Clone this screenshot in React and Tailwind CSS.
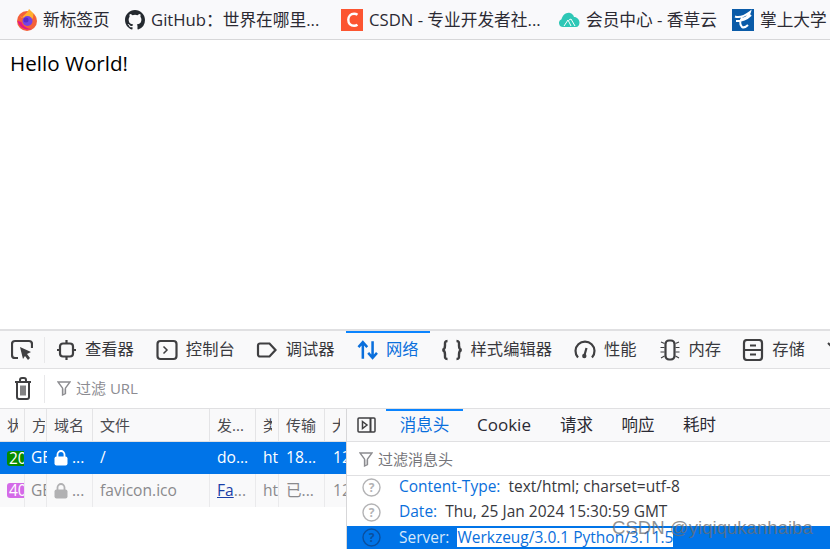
import React from 'react'

const FONT = 'font-["Open_Sans","Noto_Sans_CJK_SC",sans-serif]'

function FirefoxIcon() {
  return (
    <svg width="22" height="22" viewBox="0 0 22 22">
      <circle cx="11" cy="12" r="10" fill="#f4603a" />
      <path d="M3 5c1 2 2 3 3 4 1-3 5-4 7-9 2 2 7 6 8 12 0-3-2-6-4-7 1 4-1 6-3 5-2 0-10-1-11-5z" fill="#ffb02e" />
      <path d="M1.500 12c2 7 9 10 14 8-4 0-9-3-10-7z" fill="#e31587" />
      <circle cx="11.500" cy="12" r="5" fill="#7542e5" />
      <circle cx="10" cy="11" r="2.500" fill="#592acb" />
    </svg>
  )
}

function GitHubIcon() {
  return (
    <svg width="20" height="20" viewBox="0 0 16 16" fill="#24292f">
      <path d="M8 0C3.58 0 0 3.58 0 8c0 3.54 2.29 6.53 5.47 7.59.4.07.55-.17.55-.38 0-.19-.01-.82-.01-1.49-2.01.37-2.53-.49-2.69-.94-.09-.23-.48-.94-.82-1.13-.28-.15-.68-.52-.01-.53.63-.01 1.08.58 1.23.82.72 1.21 1.87.87 2.33.66.07-.52.28-.87.51-1.07-1.78-.2-3.64-.89-3.64-3.95 0-.87.31-1.59.82-2.15-.08-.2-.36-1.02.08-2.12 0 0 .67-.21 2.2.82a7.6 7.6 0 0 1 4 0c1.53-1.04 2.2-.82 2.2-.82.44 1.1.16 1.92.08 2.12.51.56.82 1.27.82 2.15 0 3.07-1.87 3.75-3.65 3.95.29.25.54.73.54 1.48 0 1.07-.01 1.93-.01 2.2 0 .21.15.46.55.38A8 8 0 0 0 16 8c0-4.42-3.58-8-8-8z" />
    </svg>
  )
}

function CsdnIcon() {
  return (
    <svg width="22" height="22" viewBox="0 0 22 22">
      <rect width="22" height="22" fill="#fc5531" />
      <path d="M16.500 5.800c-1-.7-2.200-1-3.400-1-3.600 0-5.800 2.600-5.800 6s2.200 6 5.800 6c1.200 0 2.400-.3 3.400-1" fill="none" stroke="#fff" strokeWidth="2.400" />
    </svg>
  )
}

function CloudIcon() {
  return (
    <svg width="21" height="15" viewBox="0 0 21 15">
      <path d="M4 15a4 4 0 0 1-1.500-7.700C3.500 3 7.500 0 11 1c2 .5 3.500 2 4 4 3 0 5.500 2.500 5.500 5.500 0 2.500-1.500 4.500-3.500 4.500z" fill="#2ec7b6" />
      <path d="M5 14l4-6 3 6M10 8l2-1 4 7" fill="none" stroke="#fff" strokeWidth="1" />
    </svg>
  )
}

function TelecomIcon() {
  return (
    <svg width="22" height="22" viewBox="0 0 22 22">
      <rect width="22" height="22" fill="#0a5ba8" />
      <path d="M3 7.500c4 1.500 9 0 15-4.500-1 4-5 7-9 7M4 12c4 0 10-1 15-6M11 8c-3 3-4 7-1 10 2 1 4 0 6-2" fill="none" stroke="#fff" strokeWidth="2" />
    </svg>
  )
}

function Bookmark({ icon, label, className }) {
  return (
    <div className={`flex items-center shrink-0 whitespace-nowrap ${className}`}>
      {icon}
      <span className="text-[16.7px] text-[#2b2a33] leading-none pt-[1px]">{label}</span>
    </div>
  )
}

const STROKE = { fill: 'none', stroke: '#3f3f41', strokeWidth: 2.2 }

const TOOL_ICONS = {
  inspector: (
    <svg width="22" height="22" viewBox="0 0 22 22" {...STROKE}>
      <rect x="5" y="4.500" width="13" height="13" rx="3" />
      <path d="M11.500 1v3.500M11.500 17.500V21M2 11h3M18 11h3" />
    </svg>
  ),
  console: (
    <svg width="22" height="22" viewBox="0 0 22 22" {...STROKE}>
      <rect x="1.500" y="2" width="19" height="18" rx="3" />
      <path d="M7.500 7.500l3.500 3.500-3.500 3.500" strokeWidth="1.500" />
    </svg>
  ),
  debugger: (
    <svg width="22" height="22" viewBox="0 0 22 22" {...STROKE}>
      <path d="M4 4.500h9.500l6 6.500-6 6.500H4a2 2 0 0 1-2-2v-9a2 2 0 0 1 2-2z" />
    </svg>
  ),
  network: (
    <svg width="22" height="22" viewBox="0 0 22 22" fill="none" stroke="#0a6fdc" strokeWidth="2.600">
      <path d="M6 20V3M1.500 8L6 3l4.500 5M16 2v17M11.500 14l4.500 5 4.500-5" />
    </svg>
  ),
  style: (
    <svg width="22" height="22" viewBox="0 0 22 22" {...STROKE} strokeWidth="2.400">
      <path d="M6.500 2C3.500 2 4 4 4 6.500 4 9 3.500 10.500 1.500 11 3.500 11.500 4 13 4 15.500S3.500 20 6.500 20M15.500 2c3 0 2.500 2 2.500 4.500s.5 4 2.500 4.500c-2 .5-2.500 2-2.500 4.500s.5 4.500-2.500 4.500" />
    </svg>
  ),
  perf: (
    <svg width="22" height="22" viewBox="0 0 22 22" {...STROKE}>
      <path d="M4 18.500a9.500 9.500 0 1 1 14 0" />
      <path d="M12.500 9l-2 7" />
      <circle cx="10.300" cy="17" r="2.200" fill="#3f3f41" stroke="none" />
    </svg>
  ),
  memory: (
    <svg width="22" height="22" viewBox="0 0 22 22" {...STROKE}>
      <rect x="6.500" y="1.500" width="9" height="19" rx="3.500" />
      <path d="M5.500 4.500L2 3M5.500 8.500H1.500M5.500 13H1.500M5.500 17L2 19M16.500 4.500L20 3M16.500 8.500h4M16.500 13h4M16.500 17l3.500 2" strokeWidth="1.200" />
    </svg>
  ),
  storage: (
    <svg width="22" height="22" viewBox="0 0 22 22" {...STROKE}>
      <rect x="2" y="1" width="18" height="20" rx="3" />
      <path d="M2 11h18M8 6.500h6M8 15.500h6" />
    </svg>
  ),
}

const TOOL_TABS = [
  { key: 'inspector', label: '查看器', pl: 'pl-[10px]' },
  { key: 'console', label: '控制台', pl: 'pl-[11px]' },
  { key: 'debugger', label: '调试器', pl: 'pl-[10px]' },
  { key: 'network', label: '网络', pl: 'pl-[11px]', active: true, w: 'w-[84px]' },
  { key: 'style', label: '样式编辑器', pl: 'pl-[11px]' },
  { key: 'perf', label: '性能', pl: 'pl-[11px]' },
  { key: 'memory', label: '内存', pl: 'pl-[11px]' },
  { key: 'storage', label: '存储', pl: 'pl-[10px]' },
]

function LockIcon({ color }) {
  return (
    <svg width="14" height="16" viewBox="0 0 14 16" className="shrink-0">
      <path d="M3.500 7V4.500a3.500 3.500 0 0 1 7 0V7" fill="none" stroke={color} strokeWidth="1.800" />
      <rect x="0.500" y="6.500" width="13" height="9" rx="2" fill={color} />
    </svg>
  )
}

function FunnelIcon() {
  return (
    <svg width="14" height="15" viewBox="0 0 14 15" fill="none" stroke="#8c8c90" strokeWidth="1.300">
      <path d="M1 1h12L8.500 7v5.500L5.500 14V7z" />
      <path d="M6.500 7.500h1v5l-1 .8z" fill="#a5a5a8" stroke="none" />
    </svg>
  )
}

function HelpIcon({ dark }) {
  const c = dark ? '#0a4f9e' : '#b3b3b5'
  return (
    <svg width="19" height="19" viewBox="0 0 19 19" className="shrink-0">
      <circle cx="9.500" cy="9.500" r="8.500" fill="none" stroke={c} strokeWidth="1.400" />
      <text x="9.500" y="14" textAnchor="middle" fontSize="12" fontWeight="700" fill={c} fontFamily="Open Sans, sans-serif">?</text>
    </svg>
  )
}

const COLUMNS = [
  'w-[25px]', 'w-[22px]', 'w-[46px]', 'w-[117px]', 'w-[46px]', 'w-[23px]', 'w-[46px]', 'w-[21px]',
]

function Cell({ i, children, className = '' }) {
  return (
    <div className={`${COLUMNS[i]} shrink-0 h-full overflow-hidden whitespace-nowrap flex items-center ${className}`}>
      {children}
    </div>
  )
}

const HEADS = [
  { label: '状态', clip: 'max-w-[11px]' },
  { label: '方法', clip: 'max-w-[13px]' },
  { label: '域名', clip: '' },
  { label: '文件', clip: '' },
  { label: '发...', clip: '' },
  { label: '类型', clip: 'max-w-[9px]' },
  { label: '传输', clip: '' },
  { label: '大小', clip: 'max-w-[8px]' },
]

function HeaderRow() {
  return (
    <div className="flex h-[33px] bg-[#f9f9fa] border-b border-[#e0e0e2] text-[15px] text-[#4a4a4f]">
      {HEADS.map((h, i) => (
        <Cell key={h.label} i={i} className={`pl-[7px] ${i < 7 ? 'border-r border-[#e4e4e6]' : ''}`}>
          <span className={`overflow-hidden ${h.clip}`}>{h.label}</span>
        </Cell>
      ))}
    </div>
  )
}

function RequestRow({ selected, status, statusBg, lockColor, file, cause, type, height }) {
  const border = selected ? '' : 'border-r border-[#eaeaec]'
  return (
    <div className={`flex ${height} text-[15.6px] ${selected ? 'bg-[#0074e8] text-white' : 'bg-[#f9f9fa] text-[#8a8a8d]'}`}>
      <Cell i={0} className={`pl-[7px] ${border}`}>
        <span className={`w-[17px] h-[15px] shrink-0 overflow-hidden rounded-l-[3px] text-white text-[15.5px] leading-[15px] pl-[2px] ${statusBg}`}>
          {status}
        </span>
      </Cell>
      <Cell i={1} className={`pl-[6px] ${border}`}>GET</Cell>
      <Cell i={2} className={`pl-[7px] gap-[4px] ${border}`}>
        <LockIcon color={lockColor} />
        <span>...</span>
      </Cell>
      <Cell i={3} className={`pl-[7px] ${border}`}>{file}</Cell>
      <Cell i={4} className={`pl-[7px] ${border}`}>{cause}</Cell>
      <Cell i={5} className={`pl-[7px] ${border}`}>ht</Cell>
      <Cell i={6} className={`pl-[7px] ${border}`}>{type}</Cell>
      <Cell i={7} className="pl-[8px]">12</Cell>
    </div>
  )
}

function HeaderLine({ name, value, selected, className }) {
  return (
    <div className={`flex items-center whitespace-nowrap pl-[15px] ${selected ? 'bg-[#0074e8]' : ''} ${className}`}>
      <HelpIcon dark={selected} />
      <span className={`ml-[18px] mr-[8px] ${selected ? 'text-[#d6e8fb]' : 'text-[#0a6fdc]'}`}>{name}</span>
      {selected ? (
        <span className="bg-white text-[#0a6fdc] h-[19px] leading-[19px]">{value}</span>
      ) : (
        <span className="text-[#38383d]">{value}</span>
      )}
    </div>
  )
}

export default function App() {
  return (
    <div className={`relative w-[830px] h-[549px] overflow-hidden bg-white flex flex-col ${FONT}`}>
      <div className="h-[40px] shrink-0 bg-[#f9f9fb] border-b border-[#d7d7d9] flex items-center overflow-hidden pl-[16px]">
        <Bookmark icon={<FirefoxIcon />} label="新标签页" className="gap-[5px] w-[109px]" />
        <Bookmark icon={<GitHubIcon />} label="GitHub：世界在哪里..." className="gap-[6px] w-[216px]" />
        <Bookmark icon={<CsdnIcon />} label="CSDN - 专业开发者社..." className="gap-[6px] w-[218px]" />
        <Bookmark icon={<CloudIcon />} label="会员中心 - 香草云" className="gap-[6px] w-[173px]" />
        <Bookmark icon={<TelecomIcon />} label="掌上大学" className="gap-[6px]" />
      </div>

      <div className="h-[289px] shrink-0 pl-[10px] pt-[9px] text-[20.6px] leading-[28px] text-black">Hello World!</div>

      <div className="h-[40px] shrink-0 border-t-2 border-[#e0e0e2] border-b bg-[#f9f9fa] flex items-center overflow-hidden">
        <div className="pl-[11px] w-[45px] h-[26px] flex items-center border-r border-[#e8e8ea] shrink-0">
          <svg width="22" height="22" viewBox="0 0 22 22" fill="none" stroke="#3f3f41" strokeWidth="2.200">
            <path d="M7 19H4a3 3 0 0 1-3-3V5a3 3 0 0 1 3-3h14a3 3 0 0 1 3 3v4" />
            <path d="M9 8l11 5-4 2 3 4-2 2-3-4-2 3z" fill="#3f3f41" stroke="none" />
          </svg>
        </div>
        {TOOL_TABS.map((t) => (
          <div
            key={t.key}
            className={`relative h-full flex items-center gap-[8px] shrink-0 pr-[11px] ${t.pl} ${t.w || ''}`}
          >
            {t.active && <div className="absolute top-0 left-0 right-0 h-[2px] bg-[#0a84ff]" />}
            {TOOL_ICONS[t.key]}
            <span className={`text-[16.3px] whitespace-nowrap ${t.active ? 'text-[#0a6fdc]' : 'text-[#38383d]'}`}>{t.label}</span>
          </div>
        ))}
        <svg width="10" height="8" viewBox="0 0 10 8" className="ml-[11px] shrink-0 -mt-[8px]" fill="none" stroke="#3f3f41" strokeWidth="2">
          <path d="M1 1l4 4 4-4" />
        </svg>
      </div>

      <div className="h-[40px] shrink-0 border-b border-[#e0e0e2] bg-white flex items-center">
        <div className="pl-[14px] w-[45px] h-[28px] flex items-center border-r border-[#e8e8ea] shrink-0">
          <svg width="18" height="23" viewBox="0 0 18 23" fill="none" stroke="#3f3f41" strokeWidth="2">
            <path d="M1 5h16M6 5V3a2 2 0 0 1 2-2h2a2 2 0 0 1 2 2v2" />
            <path d="M3 5v15a2 2 0 0 0 2 2h8a2 2 0 0 0 2-2V5" />
            <path d="M7 8.500v10M9 8.500v10M11 8.500v10" strokeWidth="1.300" />
          </svg>
        </div>
        <div className="flex items-center gap-[5px] pl-[12px] text-[15px] text-[#8c8c92]">
          <FunnelIcon />
          过滤 URL
        </div>
      </div>

      <div className="flex-1 flex min-h-0">
        <div className="w-[347px] shrink-0 border-r border-[#d7d7d9]">
          <HeaderRow />
          <RequestRow
            selected
            height="h-[32px]"
            status="200"
            statusBg="bg-[#058b00]"
            lockColor="#ffffff"
            file="/"
            cause="do..."
            type="18..."
          />
          <RequestRow
            height="h-[33px]"
            status="404"
            statusBg="bg-[#d46be8]"
            lockColor="#b1b1b3"
            file="favicon.ico"
            cause={
              <span>
                <span className="text-[#1a3fa8] underline">Fa</span>...
              </span>
            }
            type="已..."
          />
        </div>

        <div className="flex-1 min-w-0 flex flex-col">
          <div className="h-[33px] shrink-0 bg-[#f9f9fa] border-b border-[#e0e0e2] flex items-center text-[16.5px] text-[#2b2a33]">
            <div className="w-[39px] flex justify-center shrink-0">
              <svg width="19" height="16" viewBox="0 0 19 16" fill="none" stroke="#3f3f41" strokeWidth="1.500">
                <rect x="1" y="1" width="17" height="14" rx="1" />
                <path d="M13.500 1v14" strokeWidth="2" />
                <path d="M5.500 4.500l4.500 3.500-4.500 3.500z" />
              </svg>
            </div>
            <div className="relative h-full w-[77px] flex items-center justify-center text-[#0a6fdc] shrink-0">
              <div className="absolute top-0 left-0 right-0 h-[2px] bg-[#0a84ff]" />
              消息头
            </div>
            <div className="w-[82px] text-center text-[17px] shrink-0">Cookie</div>
            <div className="w-[63px] text-center shrink-0">请求</div>
            <div className="w-[60px] text-center shrink-0">响应</div>
            <div className="w-[63px] text-center shrink-0">耗时</div>
          </div>
          <div className="h-[34px] shrink-0 border-b border-[#e0e0e2] flex items-center gap-[5px] pl-[12px] pt-[2px] text-[15px] text-[#75757a]">
            <FunnelIcon />
            过滤消息头
          </div>
          <div className="flex-1 text-[15.5px] overflow-hidden">
            <HeaderLine name="Content-Type:" value="text/html; charset=utf-8" className="h-[22px]" />
            <HeaderLine name="Date:" value="Thu, 25 Jan 2024 15:30:59 GMT" className="h-[28px]" />
            <HeaderLine name="Server:" value="Werkzeug/3.0.1 Python/3.11.5" selected className="h-[23px]" />
          </div>
        </div>
      </div>

      <div className="absolute left-[612px] top-[517px] text-[18.6px] leading-[22px] whitespace-nowrap text-[#6e6e6e]/75 font-['Liberation_Sans',sans-serif]">
        CSDN @yiqiqukanhaiba
      </div>
    </div>
  )
}
